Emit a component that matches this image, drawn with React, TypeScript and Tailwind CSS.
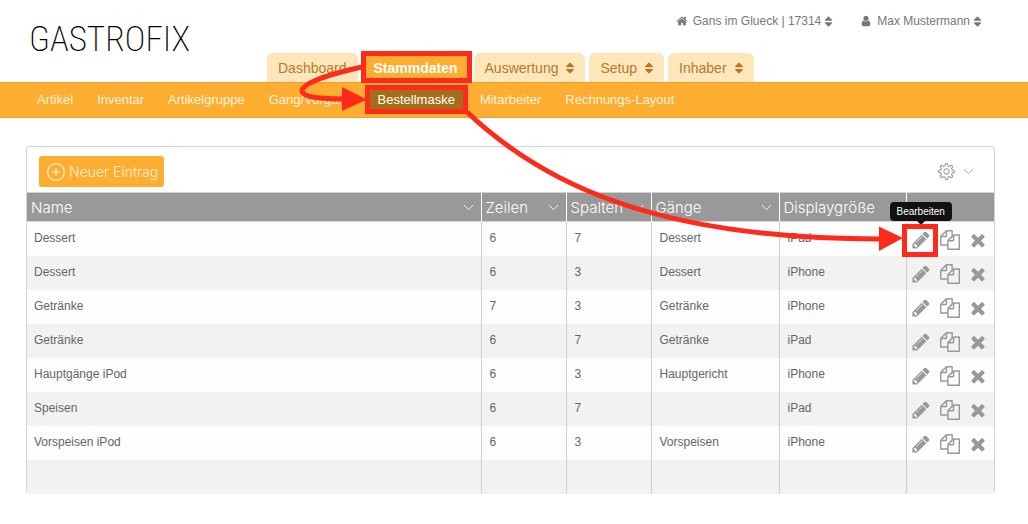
import type { ReactNode } from 'react';
import { ChevronDown, CirclePlus } from 'lucide-react';
import { FaSort } from 'react-icons/fa';
import { SlSettings } from 'react-icons/sl';

const iconPaths = {
  home: 'M1472 992v480q0 26-19 45t-45 19h-384v-384h-256v384h-384q-26 0-45-19t-19-45v-480q0-1 .5-3t.5-3l575-474 575 474q1 2 1 6zm223-69l-62 74q-8 9-21 11h-3q-13 0-21-7l-692-577-692 577q-12 8-24 7-13-2-21-11l-62-74q-8-10-7-23.5t11-21.5l719-599q32-26 76-26t76 26l244 204v-195q0-14 9-23t23-9h192q14 0 23 9t9 23v408l219 182q10 8 11 21.5t-7 23.5z',
  user: 'M1536 1399q0 109-62.5 187t-150.5 78h-854q-88 0-150.5-78t-62.5-187q0-85 8.5-160.5t31.5-152 58.5-131 94-89 134.5-34.5q131 128 313 128t313-128q76 0 134.5 34.5t94 89 58.5 131 31.5 152 8.5 160.5zm-256-887q0 159-112.5 271.5t-271.5 112.5-271.5-112.5-112.5-271.5 112.5-271.5 271.5-112.5 271.5 112.5 112.5 271.5z',
  pencil: 'M491 1536l91-91-235-235-91 91v107h128v128h107zm523-928q0-22-22-22-10 0-17 7l-542 542q-7 7-7 17 0 22 22 22 10 0 17-7l542-542q7-7 7-17zm-54-192l416 416-832 832h-416v-416zm683 96q0 53-37 90l-166 166-416-416 166-165q36-38 90-38 53 0 91 38l235 234q37 39 37 91z',
  copy: 'M1696 384q40 0 68 28t28 68v1216q0 40-28 68t-68 28h-960q-40 0-68-28t-28-68v-288h-544q-40 0-68-28t-28-68v-672q0-40 20-88t48-76l408-408q28-28 76-48t88-20h416q40 0 68 28t28 68v328q68-40 128-40h416zm-544 213l-299 299h299v-299zm-640-384l-299 299h299v-299zm196 647l316-316v-416h-384v416q0 40-28 68t-68 28h-416v640h512v-256q0-40 20-88t48-76zm956 804v-1152h-384v416q0 40-28 68t-68 28h-416v640h896z',
  times: 'M1490 1322q0 40-28 68l-136 136q-28 28-68 28t-68-28l-294-294-294 294q-28 28-68 28t-68-28l-136-136q-28-28-28-68t28-68l294-294-294-294q-28-28-28-68t28-68l136-136q28-28 68-28t68 28l294 294 294-294q28-28 68-28t68 28l136 136q28 28 28 68t-28 68l-294 294 294 294q28 28 28 68z',
};

interface IconProps {
  name: keyof typeof iconPaths;
  size: number;
}

function Icon({ name, size }: IconProps) {
  return (
    <svg width={size} height={size} viewBox="0 0 1792 1792" fill="currentColor" className="shrink-0" aria-hidden="true">
      <path d={iconPaths[name]} />
    </svg>
  );
}

const tabs = [
  { label: 'Dashboard' },
  { label: 'Stammdaten', active: true },
  { label: 'Auswertung', menu: true },
  { label: 'Setup', menu: true },
  { label: 'Inhaber', menu: true },
];

const subNav = [
  'Artikel',
  'Inventar',
  'Artikelgruppe',
  'Gang/Vorgang',
  'Bestellmaske',
  'Mitarbeiter',
  'Rechnungs-Layout',
];

const rows = [
  { name: 'Dessert', zeilen: '6', spalten: '7', gang: 'Dessert', display: 'iPad' },
  { name: 'Dessert', zeilen: '6', spalten: '3', gang: 'Dessert', display: 'iPhone' },
  { name: 'Getränke', zeilen: '7', spalten: '3', gang: 'Getränke', display: 'iPhone' },
  { name: 'Getränke', zeilen: '6', spalten: '7', gang: 'Getränke', display: 'iPad' },
  { name: 'Hauptgänge iPod', zeilen: '6', spalten: '3', gang: 'Hauptgericht', display: 'iPhone' },
  { name: 'Speisen', zeilen: '6', spalten: '7', gang: '', display: 'iPad' },
  { name: 'Vorspeisen iPod', zeilen: '6', spalten: '3', gang: 'Vorspeisen', display: 'iPhone' },
];

function HeaderCell({ children }: { children?: ReactNode }) {
  return (
    <th className="border-l border-white px-1 pt-[2px] font-light first:border-l-0">
      {children && (
        <button className="flex w-full items-center justify-between text-left">
          {children}
          <ChevronDown size={17} strokeWidth={1.25} className="shrink-0" />
        </button>
      )}
    </th>
  );
}

function Cell({ children }: { children?: ReactNode }) {
  return <td className="border-l border-[#cfcfcf] px-2 pb-[2px] first:border-l-0 first:pl-[7px]">{children}</td>;
}

function Header() {
  return (
    <header className="flex h-[82px] justify-between pl-[29px]">
      <a
        href="#"
        className="pt-[14px] font-['Roboto_Condensed','Liberation_Sans_Narrow','Roboto'] text-[35px] leading-[52px] font-extralight text-black"
      >
        GASTROFIX
      </a>
      <div className="flex h-7 grow justify-end gap-[25px] pt-[14px] pr-[44px] text-xs text-[#777]">
        <button className="flex h-[14px] items-center gap-[5px]">
          <Icon name="home" size={12} />
          <span>Gans im Glueck | 17314</span>
          <FaSort size={13} className="-ml-1" />
        </button>
        <button className="flex h-[14px] items-center gap-[5px]">
          <Icon name="user" size={12} />
          <span>Max Mustermann</span>
          <FaSort size={13} className="-ml-1" />
        </button>
      </div>
    </header>
  );
}

function Tabs() {
  return (
    <nav className="-mt-[29px] flex h-[29px] gap-1 pl-[267px] text-sm">
      {tabs.map((tab) => (
        <button
          key={tab.label}
          className={
            tab.active
              ? 'flex items-center rounded-t-md bg-[#fdad30] px-3 font-bold text-white'
              : 'flex items-center gap-1 rounded-t-md bg-[#fee6bb] px-[11px] text-[#b37a2c]'
          }
        >
          {tab.label}
          {tab.menu && <FaSort size={14} className="-mr-[3px] ml-px" />}
        </button>
      ))}
    </nav>
  );
}

// Walkthrough markers drawn on top of the page: boxes and arrows
function Guide() {
  return (
    <svg
      width="1028"
      height="524"
      viewBox="0 0 1028 524"
      className="pointer-events-none absolute top-0 left-0"
      fill="none"
      stroke="#fe2b1c"
      strokeWidth="5"
      aria-hidden="true"
    >
      <rect x="363.5" y="53.5" width="106" height="27" />
      <rect x="367.5" y="87.5" width="98" height="24" />
      <rect x="904.5" y="226.5" width="31" height="28" />
      <path d="M362 67C330 74 302 83 302 91C303 97 320 99 344 99" />
      <path d="M467 112C545 186 660 239 880 239" />
      <path d="M342 87L367 99.500L342 111Z" fill="#fe2b1c" stroke="none" />
      <path d="M879 226.500L903 238L879 251Z" fill="#fe2b1c" stroke="none" />
    </svg>
  );
}

export default function App() {
  return (
    <div className="relative bg-white pb-[30px] font-['Liberation_Sans',Arial,sans-serif]">
      <Header />
      <Tabs />

      <nav className="flex h-9 items-center border-y border-[#eda136] bg-[#fdad30] pl-[30px] text-[13px] text-[#fff3df]">
        {subNav.map((item) => (
          <a
            key={item}
            href="#"
            className={
              item === 'Bestellmaske'
                ? 'mx-[5px] bg-[#a66d18] px-2 py-[2px] text-white'
                : 'px-3 first:pl-[7px]'
            }
          >
            {item}
          </a>
        ))}
      </nav>

      <main className="mt-7 mr-[33px] ml-[26px] overflow-hidden rounded border border-b-0 border-[#d3d3d3]">
        <div className="flex h-[45px] items-center justify-between pt-1 pr-[17px] pl-3">
          <button className="flex h-[31px] items-center gap-[3px] rounded-[3px] bg-[#fdad30] pr-[6px] pl-[7px] font-['Inter',sans-serif] text-sm font-light text-[#fff3df]">
            <CirclePlus size={20} strokeWidth={1.5} />
            Neuer Eintrag
          </button>
          <button aria-label="Einstellungen" className="flex items-center gap-[5px] text-[#999]">
            <SlSettings size={17} />
            <ChevronDown size={17} strokeWidth={1.25} />
          </button>
        </div>

        <table className="w-full table-fixed border-collapse text-left text-xs text-[#666]">
          <colgroup>
            <col />
            <col className="w-[85px]" />
            <col className="w-[85px]" />
            <col className="w-[128px]" />
            <col className="w-[127px]" />
            <col className="w-[88px]" />
          </colgroup>
          <thead>
            <tr className="h-[29px] border-y border-[#d3d3d3] bg-[#999] font-['Inter',sans-serif] text-[15px] text-white">
              <HeaderCell>Name</HeaderCell>
              <HeaderCell>Zeilen</HeaderCell>
              <HeaderCell>Spalten</HeaderCell>
              <HeaderCell>Gänge</HeaderCell>
              <HeaderCell>Displaygröße</HeaderCell>
              <HeaderCell />
            </tr>
          </thead>
          <tbody>
            {rows.map((row, i) => (
              <tr key={i} className="h-[34px] odd:bg-[#fdfdfd] even:bg-[#f2f2f2]">
                <Cell>{row.name}</Cell>
                <Cell>{row.zeilen}</Cell>
                <Cell>{row.spalten}</Cell>
                <Cell>{row.gang}</Cell>
                <Cell>{row.display}</Cell>
                <td className="border-l border-[#cfcfcf] pt-[2px] pl-1">
                  <div className="relative flex items-center text-[#999]">
                    <button aria-label="Bearbeiten">
                      <Icon name="pencil" size={20} />
                    </button>
                    <button aria-label="Kopieren" className="ml-[9px]">
                      <Icon name="copy" size={20} />
                    </button>
                    <button aria-label="Löschen" className="ml-2">
                      <Icon name="times" size={20} />
                    </button>
                    {i === 0 && (
                      <div
                        role="tooltip"
                        className="absolute bottom-[29px] -left-[21px] rounded bg-[#111] px-[7px] py-[2px] text-[10px] leading-[15px] text-white"
                      >
                        Bearbeiten
                        <span className="absolute -bottom-1 left-[27px] border-x-4 border-t-4 border-x-transparent border-t-[#111]" />
                      </div>
                    )}
                  </div>
                </td>
              </tr>
            ))}
            <tr className="h-[34px] bg-[#f2f2f2]">
              <Cell />
              <Cell />
              <Cell />
              <Cell />
              <Cell />
              <Cell />
            </tr>
          </tbody>
        </table>
      </main>

      <Guide />
    </div>
  );
}
